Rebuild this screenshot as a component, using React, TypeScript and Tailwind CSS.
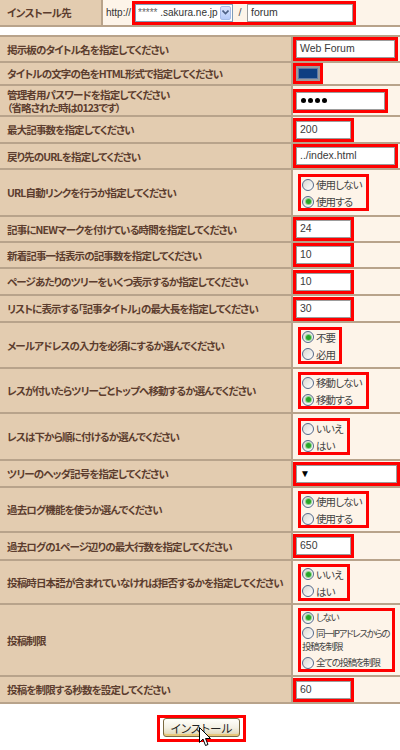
import React from 'react';

const JP = "font-['Noto_Sans_CJK_JP',sans-serif] [font-feature-settings:'palt']";
const LINE = 'border-[#b8a38b]';
const EN = "font-['Liberation_Sans',Arial,sans-serif]";

function Radio({ checked }: { checked?: boolean }) {
  return (
    <span className="w-[12px] h-[12px] rounded-full border border-[#55698a] bg-linear-to-br from-[#d8d8d2] to-white inline-flex items-center justify-center shrink-0 mr-[2px]">
      {checked && <span className="w-[5px] h-[5px] rounded-full bg-[#2aa52a] ring-1 ring-[#8fd48f]" />}
    </span>
  );
}

const OPT_TEXT = `${JP} text-[10.5px] tracking-[-0.9px] leading-[13px] text-[#444] whitespace-nowrap`;
const OPT_TEXT_SM = `${JP} text-[9.5px] tracking-[-1.3px] leading-[13px] text-[#444] whitespace-nowrap`;

function Option({ label, checked, first }: { label: string; checked?: boolean; first?: boolean }) {
  return (
    <div className={`flex items-center h-[13px] ${first ? '' : 'mt-[4px]'}`}>
      <Radio checked={checked} />
      <span className={OPT_TEXT}>{label}</span>
    </div>
  );
}

function RadioGroup({ options, checkedIndex }: { options: string[]; checkedIndex: number }) {
  return (
    <div className="ml-[5px] border-[3px] border-[#ff0000] pl-[1px] pr-[4px] pt-[1px] inline-flex flex-col">
      {options.map((o, i) => (
        <Option key={o} label={o} checked={i === checkedIndex} first={i === 0} />
      ))}
    </div>
  );
}

function TextBox({ value, w }: { value: React.ReactNode; w: string }) {
  return (
    <div className={`border-[3px] border-[#ff0000] ${w}`}>
      <div className={`h-[18px] bg-white border border-[#9c9c9c] flex items-center pl-[3px] ${EN} text-[10.5px] text-[#3a3a3a] overflow-hidden whitespace-nowrap`}>
        {value}
      </div>
    </div>
  );
}

function Row({ label, h, children }: { label: React.ReactNode; h: string; children: React.ReactNode }) {
  return (
    <div className={`grid grid-cols-[293px_1fr] border-b-2 ${LINE} ${h}`}>
      <div className={`bg-[#e3ccb0] border-r-2 ${LINE} flex items-center pl-[7px] overflow-hidden`}>
        <div className={`${JP} text-[10.5px] tracking-[-0.85px] leading-[13px] font-bold text-[#5c3d2e] whitespace-nowrap`}>{label}</div>
      </div>
      <div className="bg-[#fdf4e9] flex items-center">{children}</div>
    </div>
  );
}

export default function App() {
  return (
    <div className="w-[400px] h-[750px] bg-white relative overflow-hidden">
      {/* install target */}
      <div className={`grid grid-cols-[103px_1fr] h-[27px] border-b-2 ${LINE}`}>
        <div className={`bg-[#e3ccb0] border-r-2 ${LINE} flex items-center pl-[7px]`}>
          <span className={`${JP} text-[10.5px] tracking-[-0.6px] font-bold text-[#5c3d2e]`}>インストール先</span>
        </div>
        <div className="bg-[#fdf4e9] flex items-center pl-[3px]">
          <span className={`${EN} text-[10px] text-[#333] w-[26px] overflow-hidden whitespace-nowrap`}>http://</span>
          <div className="border-[3px] border-[#ff0000] flex items-center">
            <div className="w-[98px] h-[18px] bg-white border border-[#7f9db9] flex items-center justify-between pl-[2px] pr-[1px]">
              <span className={`${EN} text-[10px] text-[#333] whitespace-nowrap overflow-hidden`}>
                <span className="text-[#666]">*****</span> .sakura.ne.jp
              </span>
              <span className="w-[11px] h-[14px] shrink-0 bg-linear-to-b from-[#dbe6fe] to-[#b6cbf8] border border-[#a8bde9] rounded-[2px] flex items-center justify-center">
                <svg width="7" height="5" viewBox="0 0 7 5">
                  <path d="M0.5 0.5 L3.5 3.5 L6.5 0.5" fill="none" stroke="#4d6185" strokeWidth="1.6" />
                </svg>
              </span>
            </div>
            <span className={`w-[14px] text-center ${EN} text-[11px] text-[#555]`}>/</span>
            <div className={`w-[106px] h-[18px] bg-white border border-[#9c9c9c] flex items-center pl-[3px] ${EN} text-[10.5px] text-[#333]`}>
              forum
            </div>
          </div>
        </div>
      </div>

      {/* settings */}
      <div className={`mt-[8px] border-t-2 ${LINE}`}>
        <Row label="掲示板のタイトル名を指定してください" h="h-[26px]">
          <TextBox w="w-[105px]" value="Web Forum" />
        </Row>
        <Row label="タイトルの文字の色をHTML形式で指定してください" h="h-[23px]">
          <div className="border-[3px] border-[#ff0000] w-[30px] h-[21px]">
            <div className="w-full h-full border-2 border-[#9a9a9a] bg-[#0e3f82] ring-1 ring-inset ring-[#5d7aa6]" />
          </div>
        </Row>
        <Row
          label={
            <div className="flex flex-col">
              <span>管理者用パスワードを指定してください</span>
              <span>（省略された時は0123です）</span>
            </div>
          }
          h="h-[31px]"
        >
          <TextBox
            w="w-[95px]"
            value={
              <span className="flex gap-[2px] pl-[1px]">
                <span className="w-[5px] h-[5px] rounded-full bg-black" />
                <span className="w-[5px] h-[5px] rounded-full bg-black" />
                <span className="w-[5px] h-[5px] rounded-full bg-black" />
                <span className="w-[5px] h-[5px] rounded-full bg-black" />
              </span>
            }
          />
        </Row>
        <Row label="最大記事数を指定してください" h="h-[27px]">
          <TextBox w="w-[61px]" value="200" />
        </Row>
        <Row label="戻り先のURLを指定してください" h="h-[26px]">
          <TextBox w="w-[105px]" value="../index.html" />
        </Row>
        <Row label="URL自動リンクを行うか指定してください" h="h-[47px]">
          <RadioGroup options={['使用しない', '使用する']} checkedIndex={1} />
        </Row>
        <Row label="記事にNEWマークを付けている時間を指定してください" h="h-[26px]">
          <TextBox w="w-[61px]" value="24" />
        </Row>
        <Row label="新着記事一括表示の記事数を指定してください" h="h-[26px]">
          <TextBox w="w-[61px]" value="10" />
        </Row>
        <Row label="ページあたりのツリーをいくつ表示するか指定してください" h="h-[27px]">
          <TextBox w="w-[61px]" value="10" />
        </Row>
        <Row label="リストに表示する「記事タイトル」の最大長を指定してください" h="h-[27px]">
          <TextBox w="w-[61px]" value="30" />
        </Row>
        <Row label="メールアドレスの入力を必須にするか選んでください" h="h-[46px]">
          <RadioGroup options={['不要', '必用']} checkedIndex={0} />
        </Row>
        <Row label="レスが付いたらツリーごとトップへ移動するか選んでください" h="h-[45px]">
          <RadioGroup options={['移動しない', '移動する']} checkedIndex={1} />
        </Row>
        <Row label="レスは下から順に付けるか選んでください" h="h-[47px]">
          <RadioGroup options={['いいえ', 'はい']} checkedIndex={1} />
        </Row>
        <Row label="ツリーのヘッダ記号を指定してください" h="h-[27px]">
          <TextBox w="w-[107px]" value={<span className="text-[10px] text-black">▼</span>} />
        </Row>
        <Row label="過去ログ機能を使うか選んでください" h="h-[45px]">
          <RadioGroup options={['使用しない', '使用する']} checkedIndex={0} />
        </Row>
        <Row label="過去ログの1ページ辺りの最大行数を指定してください" h="h-[28px]">
          <TextBox w="w-[61px]" value="650" />
        </Row>
        <Row label="投稿時日本語が含まれていなければ拒否するかを指定してください" h="h-[44px]">
          <RadioGroup options={['いいえ', 'はい']} checkedIndex={0} />
        </Row>
        <Row label="投稿制限" h="h-[72px]">
          <div className="ml-[5px] border-[3px] border-[#ff0000] pl-[1px] pr-[3px]">
            <div className="flex items-center h-[13px]">
              <Radio checked />
              <span className={OPT_TEXT_SM}>しない</span>
            </div>
            <div className={`${OPT_TEXT_SM} mt-[3px] leading-[12px]`}>
              <span className="inline-flex align-[-2px]">
                <Radio />
              </span>
              同一IPアドレスからの
              <br />
              投稿を制限
            </div>
            <div className="flex items-center h-[13px] mt-[3px]">
              <Radio />
              <span className={OPT_TEXT_SM}>全ての投稿を制限</span>
            </div>
          </div>
        </Row>
        <Row label="投稿を制限する秒数を設定してください" h="h-[27px]">
          <TextBox w="w-[61px]" value="60" />
        </Row>
      </div>

      {/* submit */}
      <div className="flex justify-center mt-[11px] pl-[3px]">
        <div className="border-[3px] border-[#ff0000] px-[3px] pb-[2px]">
          <div className="w-[77px] h-[19px] rounded-[3px] border border-[#7a6a40] bg-linear-to-b from-[#fffffb] via-[#f4f1e4] to-[#ddd3b0] shadow-[inset_0_-2px_0_#e8c77a] flex items-center justify-center">
            <span className={`${JP} text-[11.5px] leading-[14px] text-[#222]`}>インストール</span>
          </div>
        </div>
      </div>

      {/* mouse pointer */}
      <svg className="absolute left-[199px] top-[727px]" width="13" height="20" viewBox="0 0 13 20">
        <path
          d="M0.5 0.5 L0.5 15.5 L4 12 L6.5 18.5 L9 17.5 L6.5 11.5 L11.5 11.5 Z"
          fill="white"
          stroke="black"
          strokeWidth="1"
          strokeLinejoin="round"
        />
      </svg>
    </div>
  );
}
